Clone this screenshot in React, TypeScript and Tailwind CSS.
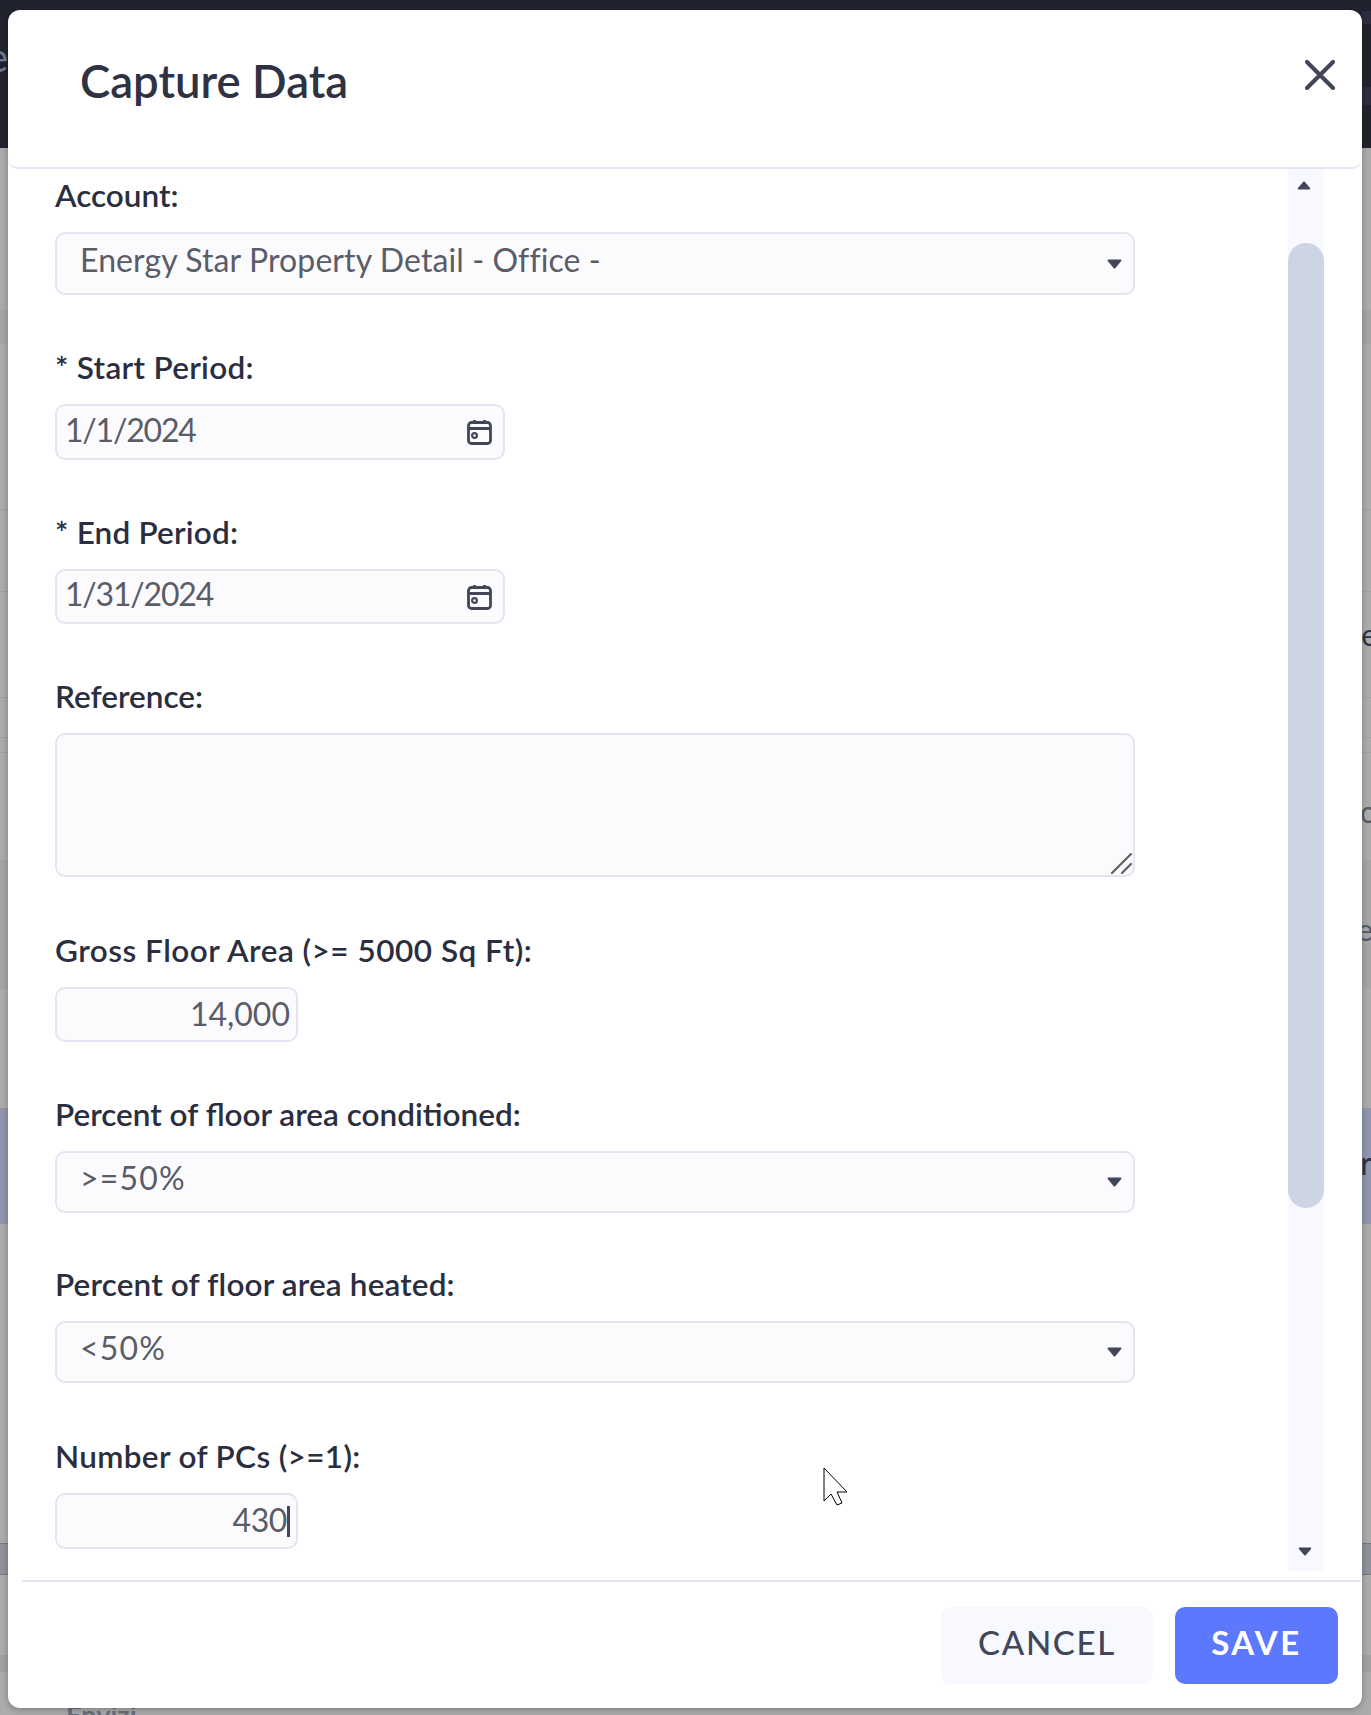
import type { ReactNode } from 'react';

const FONT = '[font-family:Lato,sans-serif]';

function CaretDown({ className = '' }: { className?: string }) {
  return (
    <svg viewBox="0 0 15 10" className={className} aria-hidden="true">
      <path d="M1.5 .5h12c.9 0 1.3 1 .7 1.6L8.3 9.2c-.4.4-1.2.4-1.6 0L.8 2.1C.2 1.5.6.5 1.5.5z" fill="#424659" />
    </svg>
  );
}

function CalendarIcon() {
  return (
    <svg viewBox="0 0 25 26" className="h-[26px] w-[25px] shrink-0" fill="none" stroke="#424659" strokeWidth="2.8" aria-hidden="true">
      <rect x="1.5" y="3.5" width="22" height="21" rx="3" />
      <path d="M1.5 9.5h22M7.5 1v4M17.5 1v4" />
      <circle cx="7.5" cy="16.5" r="2.4" strokeWidth="2.2" />
    </svg>
  );
}

function Field({ label, className = '', tracking = '', children }: { label: string; className?: string; tracking?: string; children: ReactNode }) {
  return (
    <div className={`flex flex-col ${className}`}>
      <label className={`mb-[15px] h-[40px] text-[31.5px] leading-[36px] font-semibold text-[#2b2e3f] ${tracking}`}>{label}</label>
      {children}
    </div>
  );
}

function SelectBox({ value, height, tracking = 'tracking-[0.1px]' }: { value: string; height: string; tracking?: string }) {
  return (
    <div className={`flex w-[1080px] items-center justify-between rounded-[10px] border-2 border-[#e2e6f2] bg-[#fbfbfe] pr-[11px] pl-[23px] ${height}`}>
      <span className={`-mt-[8px] text-[32px] leading-none text-[#5a5c68] ${tracking}`}>{value}</span>
      <CaretDown className="h-[10px] w-[15px]" />
    </div>
  );
}

function DateBox({ value, height }: { value: string; height: string }) {
  return (
    <div className={`flex w-[450px] items-center justify-between rounded-[10px] border-2 border-[#e2e6f2] bg-[#fbfbfe] pr-[11px] pl-[8px] ${height}`}>
      <span className="-mt-[5px] text-[32px] leading-none tracking-[-1.2px] text-[#5a5c68]">{value}</span>
      <CalendarIcon />
    </div>
  );
}

function NumberBox({ value, caret, height }: { value: string; caret?: boolean; height: string }) {
  return (
    <div className={`flex w-[243px] items-center justify-end rounded-[10px] border-2 border-[#e2e6f2] bg-[#fbfbfe] pr-[6px] ${height}`}>
      <span className={`-mt-[2px] text-[32px] leading-none text-[#5a5c68] ${caret ? 'tracking-[-0.4px]' : ''}`}>{value}</span>
      {caret && <span className="h-[31px] w-[3px] bg-[#424659]" />}
    </div>
  );
}

// page behind the dialog, only its edges show
function Backdrop() {
  return (
    <div className="flex h-[1715px] w-[1371px] flex-col overflow-hidden bg-[#ababab]">
      <div className="flex h-[148px] shrink-0 justify-between bg-[#20222e]">
        <span className="mt-[32px] -ml-[13px] text-[40px] leading-[50px] text-[#6f7a96]">e</span>
        <div className="flex w-[9px] flex-col pt-[11px]">
          <div className="h-[13px] bg-[#2b2e3e]" />
          <div className="mt-[63px] h-[18px] bg-[#2b2e3e]" />
        </div>
      </div>
      <div className="h-[162px] shrink-0" />
      <div className="h-[34px] shrink-0 bg-[#a4a4a4]" />
      <div className="h-[166px] shrink-0 border-b border-[#9da0a8]" />
      <div className="h-[82px] shrink-0 border-b border-[#9da0a8]" />
      <div className="flex h-[106px] shrink-0 items-center justify-end overflow-hidden border-b border-[#9da0a8]">
        <span className="mt-[-20px] -mr-[6px] text-[30px] text-[#2f3242]">e</span>
      </div>
      <div className="h-[40px] shrink-0 border-b border-[#9da0a8]" />
      <div className="h-[15px] shrink-0 border-b border-[#9da0a8]" />
      <div className="flex h-[107px] shrink-0 items-center justify-end overflow-hidden">
        <span className="mt-[10px] -mr-[6px] text-[30px] text-[#55586a]">o</span>
      </div>
      <div className="flex h-[129px] shrink-0 items-center justify-end overflow-hidden bg-[#a5a5a7]">
        <span className="mt-[10px] -mr-[2px] text-[30px] text-[#55586a]">ie</span>
      </div>
      <div className="h-[119px] shrink-0" />
      <div className="flex h-[116px] shrink-0 items-center justify-end overflow-hidden bg-[#9195ad]">
        <span className="mt-[-6px] -mr-px text-[32px] text-[#2f3242]">r</span>
      </div>
      <div className="h-[319px] shrink-0" />
      <div className="h-[32px] shrink-0 border-y border-[#77797f] bg-[#8e909b]" />
      <div className="h-[80px] shrink-0" />
      <div className="h-[17px] shrink-0 bg-[#a0a0a0]" />
      <div className="shrink-0 pt-[28px] pl-[66px] text-[27px] leading-[30px] font-bold text-[#6a7080]">Envizi</div>
    </div>
  );
}

function CursorArrow() {
  return (
    <svg viewBox="0 0 26 39" className="absolute top-[1467px] left-[823px] h-[39px] w-[26px]" aria-hidden="true">
      <path d="M1 1v33l7-7 6 11 5-2-5-11h10z" fill="#fff" stroke="#000" strokeWidth="1" strokeLinejoin="miter" />
    </svg>
  );
}

export default function App() {
  return (
    <div className={`relative h-[1715px] w-[1371px] overflow-hidden ${FONT}`}>
      <Backdrop />

      <div className="absolute top-[10px] left-[8px] flex h-[1698px] w-[1354px] flex-col rounded-[12px] bg-white shadow-[0_2px_6px_rgba(0,0,0,0.25)]">
        <div className="flex h-[159px] shrink-0 items-start justify-between rounded-b-[10px] border-b-2 border-[#e2e6f2] pt-[44px] pr-[27px] pl-[72px]">
          <h1 className="text-[45.5px] leading-[54px] font-semibold text-[#2f3242]">Capture Data</h1>
          <button className="mt-[6px]">
            <svg viewBox="0 0 30 30" className="h-[30px] w-[30px]" fill="none" stroke="#424659" strokeWidth="4.2" strokeLinecap="round" aria-hidden="true">
              <path d="M2 2l26 26M28 2L2 28" />
            </svg>
          </button>
        </div>

        <div className="flex h-[1411px] shrink-0 overflow-hidden pl-[47px]">
          <div className="flex w-[1080px] shrink-0 flex-col gap-[54px] pt-[8px]">
            <Field label="Account:">
              <SelectBox value="Energy Star Property Detail - Office -" height="h-[63px]" />
            </Field>
            <Field label="* Start Period:" tracking="tracking-[0.3px]">
              <DateBox value="1/1/2024" height="h-[56px]" />
            </Field>
            <Field label="* End Period:" tracking="tracking-[0.2px]">
              <DateBox value="1/31/2024" height="h-[55px]" />
            </Field>
            <Field label="Reference:">
              <div className="relative h-[144px] w-[1080px] rounded-[10px] border-2 border-[#e2e6f2] bg-[#fbfbfe]">
                <svg viewBox="0 0 21 21" className="absolute right-[1px] bottom-[1px] h-[21px] w-[21px]" fill="none" stroke="#5f5f5f" strokeWidth="2.2" strokeLinecap="round" aria-hidden="true">
                  <path d="M1 20L20 1M11 20l9-9" />
                </svg>
              </div>
            </Field>
            <Field label="Gross Floor Area (>= 5000 Sq Ft):" className="mt-px" tracking="tracking-[0.5px]">
              <NumberBox value="14,000" height="h-[55px]" />
            </Field>
            <Field label="Percent of floor area conditioned:">
              <SelectBox value=">=50%" height="h-[62px]" tracking="tracking-[1.2px]" />
            </Field>
            <Field label="Percent of floor area heated:" tracking="tracking-[0.15px]" className="-mt-px">
              <SelectBox value="<50%" height="h-[62px]" tracking="tracking-[1.2px]" />
            </Field>
            <Field label="Number of PCs (>=1):" tracking="tracking-[0.35px]" className="mt-px">
              <NumberBox value="430" caret height="h-[56px]" />
            </Field>
          </div>

          <div className="ml-[153px] flex h-[1402px] w-[36px] shrink-0 flex-col bg-[#f8f9fe]">
            <div className="flex h-[74px] shrink-0 justify-start pt-[12px] pl-[9px]">
              <CaretDown className="h-[9px] w-[14px] rotate-180" />
            </div>
            <div className="h-[965px] shrink-0 rounded-full bg-[#cdd4e4]" />
            <div className="flex flex-1 items-end pb-[15px] pl-[10px]">
              <CaretDown className="h-[9px] w-[14px]" />
            </div>
          </div>
        </div>

        <div className="mr-px ml-[14px] flex flex-1 items-start justify-end gap-[22px] border-t-2 border-[#e2e6f2] pt-[25px] pr-[23px]">
          <button className="h-[77px] w-[212px] rounded-[10px] bg-[#f8f9fe] pb-[6px] text-[33px] font-medium tracking-[1.7px] text-[#424659]">CANCEL</button>
          <button className="h-[77px] w-[163px] rounded-[10px] bg-[#5b78ff] pb-[6px] text-[33px] font-bold tracking-[2.5px] text-white">SAVE</button>
        </div>
      </div>

      <CursorArrow />
    </div>
  );
}
